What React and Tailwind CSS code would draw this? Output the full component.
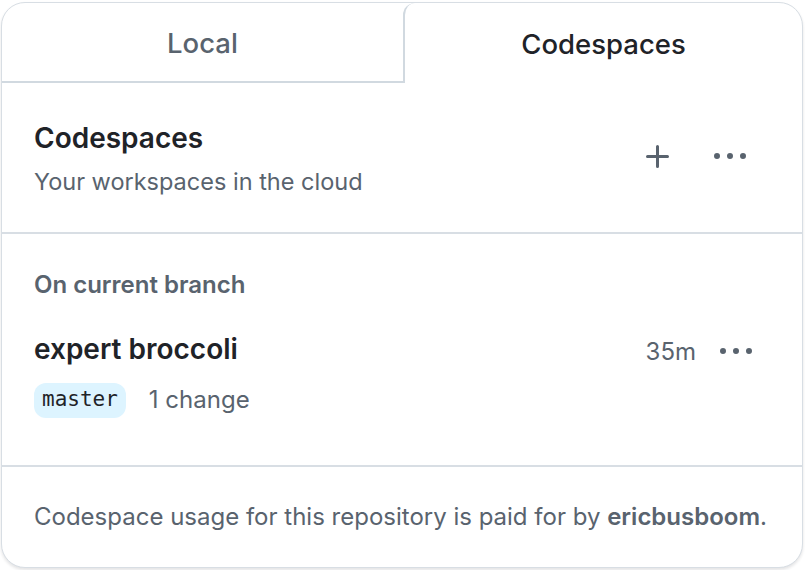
import React from 'react';

const font = { fontFamily: 'Inter, "Liberation Sans", sans-serif' };

function PlusIcon() {
  return (
    <svg width="32" height="32" viewBox="0 0 16 16" fill="#59636e">
      <path d="M7.75 2a.75.75 0 0 1 .75.75V7h4.25a.75.75 0 0 1 0 1.5H8.5v4.25a.75.75 0 0 1-1.5 0V8.5H2.75a.75.75 0 0 1 0-1.5H7V2.75A.75.75 0 0 1 7.75 2Z" />
    </svg>
  );
}

function KebabIcon() {
  return (
    <svg width="32" height="32" viewBox="0 0 16 16" fill="#59636e">
      <path d="M8 9a1.5 1.5 0 1 0 0-3 1.5 1.5 0 0 0 0 3ZM1.5 9a1.5 1.5 0 1 0 0-3 1.5 1.5 0 0 0 0 3Zm13 0a1.5 1.5 0 1 0 0-3 1.5 1.5 0 0 0 0 3Z" />
    </svg>
  );
}

export default function App() {
  return (
    <div className="w-[805px] h-[570px] bg-white pt-[2px] pl-[1px]" style={font}>
      <div className="w-[802px] h-[566px] rounded-[24px] border border-[#d8dee4] shadow-[0_2px_3px_rgba(31,35,40,0.12)] overflow-hidden flex flex-col bg-white">
        {/* tabs */}
        <div className="flex h-[80px] shrink-0">
          <div className="flex-1 border-b-2 border-[#d1d9e0] flex items-center justify-center pt-[4px] text-[27.5px] font-medium text-[#59636e]">
            Local
          </div>
          <div className="w-[399px] border-l-2 border-[#d1d9e0] rounded-tl-[12px] flex items-center justify-center pt-[4px] text-[27.5px] font-medium text-[#1f2328]">
            Codespaces
          </div>
        </div>

        {/* header */}
        <div className="flex items-center justify-between pl-[32px] pr-[56px] pt-[33px] pb-[30px] border-b-2 border-[#d8dee4]">
          <div>
            <div className="text-[28px] leading-[44px] font-semibold text-[#1f2328]">Codespaces</div>
            <div className="mt-[2px] text-[23.5px] leading-[40px] text-[#59636e]">Your workspaces in the cloud</div>
          </div>
          <div className="flex items-center gap-[40px] -mt-[4px]">
            <PlusIcon />
            <KebabIcon />
          </div>
        </div>

        {/* current branch */}
        <div className="pl-[32px] pr-[50px] pt-[33px] pb-[47px] border-b-2 border-[#d8dee4]">
          <div className="text-[24px] leading-[36px] font-semibold text-[#59636e]">On current branch</div>
          <div className="mt-[25px] flex items-center justify-between">
            <div className="text-[28px] leading-[42px] font-semibold text-[#1f2328]">expert broccoli</div>
            <div className="flex items-center gap-[24px] pt-[6px]">
              <span className="text-[24px] text-[#59636e]">35m</span>
              <KebabIcon />
            </div>
          </div>
          <div className="mt-[12px] flex items-center gap-[23px]">
            <span
              className="h-[35px] px-[8px] rounded-[12px] bg-[#ddf4ff] flex items-center text-[21px] text-[#1f2328]"
              style={{ fontFamily: '"DejaVu Sans Mono", "Liberation Mono", monospace' }}
            >
              master
            </span>
            <span className="text-[24px] text-[#59636e]">1 change</span>
          </div>
        </div>

        {/* footer */}
        <div className="pl-[32px] pt-[32px] text-[24px] leading-[36px] text-[#59636e]">
          Codespace usage for this repository is paid for by <span className="font-semibold">ericbusboom</span>.
        </div>
      </div>
    </div>
  );
}
